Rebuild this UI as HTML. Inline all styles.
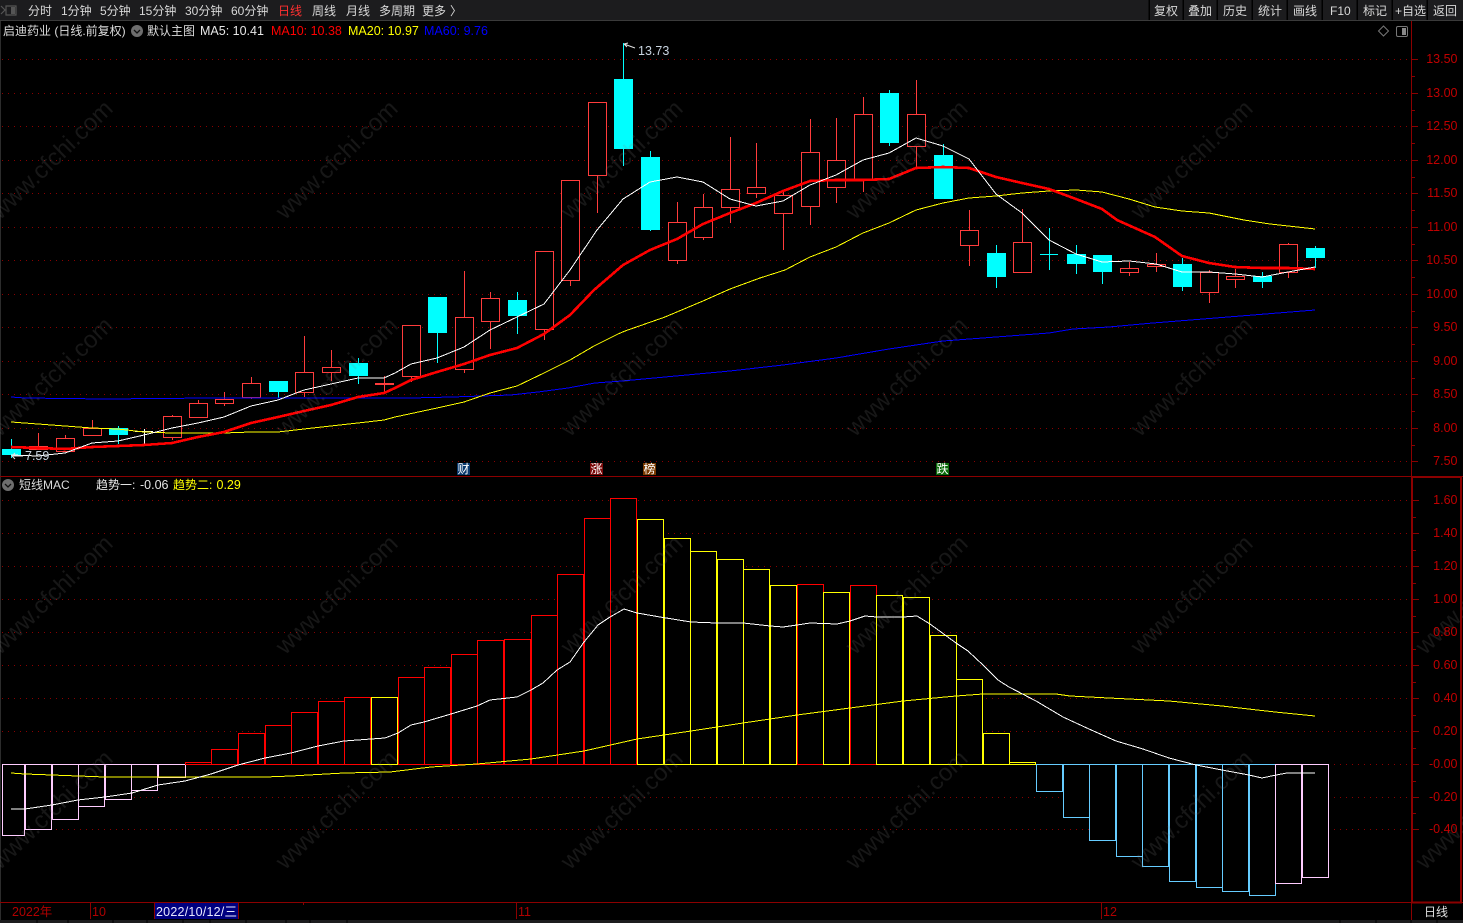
<!DOCTYPE html>
<html lang="zh"><head><meta charset="utf-8"><title>启迪药业</title>
<style>
html,body{margin:0;padding:0;background:#000;width:1463px;height:923px;overflow:hidden}
svg{display:block}
text{font-family:"Liberation Sans","Noto Sans CJK SC",sans-serif;font-size:12px}
.c{shape-rendering:crispEdges}
.tb{fill:#d8d8d8}
.ax{fill:#c00000;font-size:12.5px;text-anchor:end}
.wm{fill:#808080;fill-opacity:.18;font-size:24px;text-anchor:middle;dominant-baseline:central}
.r{fill:#000;stroke:#ff3c3c;stroke-width:1}
.b{fill:#00ffff}
.bp{fill:#000;stroke:#ffccff}.br{fill:#000;stroke:#f00}.by{fill:#000;stroke:#ff0}.bb{fill:#000;stroke:#66ccff}
</style></head><body>
<svg width="1463" height="923" viewBox="0 0 1463 923" xmlns="http://www.w3.org/2000/svg">
<rect width="1463" height="923" fill="#000"/>
<!-- top bar -->
<g class="c"><rect width="1463" height="20" fill="#1c1c1e"/><rect y="20" width="1463" height="1" fill="#3a3a3a"/>
<path d="M1149 0V20M1183 0V20M1217 0V20M1252 0V20M1287 0V20M1322 0V20M1357 0V20M1392 0V20M1427 0V20" stroke="#000" stroke-width="1.5"/>
<rect x="0" y="21" width="1" height="900" fill="#2c2c2c"/></g>
<path d="M1 6l4 4-4 4M6 6h10v9H6z" fill="none" stroke="#555" stroke-width="1.2"/><rect x="11" y="7" width="4" height="7" fill="#555"/>
<g class="tb">
<text x="28" y="15">分时</text><text x="61" y="15">1分钟</text><text x="100" y="15">5分钟</text><text x="139" y="15">15分钟</text><text x="185" y="15">30分钟</text><text x="231" y="15">60分钟</text><text x="278" y="15" style="fill:#ff3030">日线</text><text x="312" y="15">周线</text><text x="346" y="15">月线</text><text x="379" y="15">多周期</text><text x="422" y="15">更多</text><text x="450" y="15">〉</text>
<text x="1154" y="15">复权</text><text x="1188" y="15">叠加</text><text x="1223" y="15">历史</text><text x="1258" y="15">统计</text><text x="1293" y="15">画线</text><text x="1330" y="15">F10</text><text x="1363" y="15">标记</text><text x="1395" y="15">+自选</text><text x="1433" y="15">返回</text>
</g>
<!-- grid -->
<g class="c" fill="none" stroke="#8b0000" stroke-dasharray="1 5">
<path d="M2 59.5H1411M2 93.5H1411M2 126.5H1411M2 160.5H1411M2 193.5H1411M2 227.5H1411M2 260.5H1411M2 294.5H1411M2 327.5H1411M2 361.5H1411M2 394.5H1411M2 428.5H1411M2 461.5H1411"/>
<path d="M2 500.5H1411M2 533.5H1411M2 566.5H1411M2 599.5H1411M2 632.5H1411M2 665.5H1411M2 698.5H1411M2 731.5H1411M2 764.5H1411M2 797.5H1411M2 829.5H1411"/>
</g>
<!-- candle wicks -->
<g class="c" fill="none">
<path stroke="#ff3c3c" d="M38.500 433V450M65.500 435V452M92.500 420V436M172.500 415V440M198.500 400V417M224.500 392V406M251.500 377V399M304.500 336V397M331.500 350V381M384.500 376V392M411.500 325V382M464.500 271V373M490.500 292V349M544.500 251V340M570.500 180V286M597.500 102V213M677.500 202V264M703.500 194V240M730.500 137V223M756.500 143V198M783.500 192V250M810.500 119V225M836.500 118V203M863.500 97V192M916.500 80V168M969.500 210V266M1022.500 209V272M1129.500 262V276M1156.500 253V272M1209.500 270V303M1235.500 269V288M1288.500 243V278"/>
<path stroke="#00ffff" d="M11.500 439V458M118.500 426V444M278.500 381V398M358.500 358V384M437.500 297V363M517.500 292V334M623.500 43V166M650.500 151V231M889.500 90V146M943.500 144V199M996.500 245V288M1076.500 245V274M1102.500 255V284M1182.500 258V291M1262.500 272V288M1315.500 246V268M1049.500 228V270M1040 254.500H1058"/>
<path stroke="#fff" d="M144.500 429V444M135 431.500H153"/>
</g>
<!-- red bodies -->
<g class="c">
<rect class="r" x="29.500" y="446.500" width="18" height="3"/><rect class="r" x="56.500" y="438.500" width="18" height="13"/><rect class="r" x="83.500" y="428.500" width="18" height="7"/><rect class="r" x="163.500" y="416.500" width="18" height="21"/><rect class="r" x="189.500" y="403.500" width="18" height="14"/><rect class="r" x="215.500" y="399.500" width="18" height="4"/><rect class="r" x="242.500" y="383.500" width="18" height="14"/><rect class="r" x="295.500" y="372.500" width="18" height="20"/><rect class="r" x="322.500" y="367.500" width="18" height="5"/><rect x="375" y="383" width="19" height="2" fill="#ff3c3c"/><rect class="r" x="402.500" y="325.500" width="18" height="51"/><rect class="r" x="455.500" y="317.500" width="18" height="52"/><rect class="r" x="481.500" y="298.500" width="18" height="23"/><rect class="r" x="535.500" y="251.500" width="18" height="78"/><rect class="r" x="561.500" y="180.500" width="18" height="100"/><rect class="r" x="588.500" y="102.500" width="18" height="73"/><rect class="r" x="668.500" y="222.500" width="18" height="38"/><rect class="r" x="694.500" y="207.500" width="18" height="30"/><rect class="r" x="721.500" y="189.500" width="18" height="18"/><rect class="r" x="747.500" y="187.500" width="18" height="6"/><rect class="r" x="774.500" y="195.500" width="18" height="18"/><rect class="r" x="801.500" y="152.500" width="18" height="54"/><rect class="r" x="827.500" y="160.500" width="18" height="27"/><rect class="r" x="854.500" y="114.500" width="18" height="65"/><rect class="r" x="907.500" y="114.500" width="18" height="32"/><rect class="r" x="960.500" y="230.500" width="18" height="15"/><rect class="r" x="1013.500" y="242.500" width="18" height="30"/><rect class="r" x="1120.500" y="268.500" width="18" height="4"/><rect class="r" x="1147.500" y="264.500" width="18" height="2"/><rect class="r" x="1200.500" y="272.500" width="18" height="20"/><rect class="r" x="1226.500" y="276.500" width="18" height="3"/><rect class="r" x="1279.500" y="244.500" width="18" height="28"/>
<!-- cyan bodies -->
<rect class="b" x="2" y="449" width="19" height="6"/><rect class="b" x="109" y="428" width="19" height="7"/><rect class="b" x="269" y="381" width="19" height="11"/><rect class="b" x="349" y="363" width="19" height="13"/><rect class="b" x="428" y="297" width="19" height="36"/><rect class="b" x="508" y="300" width="19" height="16"/><rect class="b" x="614" y="79" width="19" height="70"/><rect class="b" x="641" y="157" width="19" height="73"/><rect class="b" x="880" y="93" width="19" height="50"/><rect class="b" x="934" y="155" width="19" height="44"/><rect class="b" x="987" y="253" width="19" height="24"/><rect class="b" x="1067" y="254" width="19" height="10"/><rect class="b" x="1093" y="255" width="19" height="17"/><rect class="b" x="1173" y="264" width="19" height="23"/><rect class="b" x="1253" y="276" width="19" height="6"/><rect class="b" x="1306" y="248" width="19" height="10"/>
</g>
<!-- MA lines -->
<g fill="none" stroke-linejoin="round" class="c">
<polyline stroke="#0000ff" stroke-width="1" points="11,397 25,398 105,399 211,398 384,398 411,398 452,397 511,395 538,392 568,388 595,383 622,381 665,377 730,371 783,365 836,358 889,349 943,341 996,337 1049,333 1073,329 1109,327 1153,323 1203,319 1253,315 1315,310"/>
<polyline stroke="#ffff00" stroke-width="1" points="11,422 38,424 65,426 92,428 118,429 144,432 172,433 198,433 224,433 251,432 278,432 304,429 331,426 358,423 384,420 395,417 437,408 464,402 490,393 517,386 544,373 570,360 594,346 618,334 625,331 665,317 703,301 730,289 760,278 785,270 810,257 836,247 863,233 889,223 916,210 943,203 969,198 996,196 1022,193 1049,191 1076,190 1102,192 1129,199 1155,207 1182,211 1209,213 1244,220 1270,224 1315,229"/>
<polyline stroke="#ff0000" stroke-width="2.6" points="11,447 38,448 65,449 92,447 118,446 144,445 172,443 198,437 224,432 251,423 278,417 304,411 331,405 358,397 384,393 395,388 411,380 437,372 464,364 490,355 517,348 544,334 570,315 594,290 623,265 650,250 677,239 703,224 730,213 756,203 783,191 810,181 836,180 863,180 889,179 916,168 943,167 969,168 996,177 1022,183 1049,189 1076,199 1102,209 1117,220 1155,237 1182,256 1209,263 1235,267 1262,268 1288,268 1315,269"/>
<polyline stroke="#ffffff" stroke-width="1" points="11,455 38,456 65,453 92,443 118,441 144,435 172,428 198,423 224,417 251,406 278,400 304,390 331,384 358,378 384,378 395,373 411,364 437,358 464,347 490,330 517,317 544,304 570,270 597,230 623,199 650,182 677,177 703,182 730,199 756,206 783,201 810,185 836,175 863,160 889,153 916,138 943,146 969,159 996,194 1022,213 1049,240 1076,254 1102,262 1129,261 1156,264 1182,272 1209,272 1235,274 1262,277 1288,272 1315,267"/>
</g>
<!-- high/low labels -->
<path d="M624 44l11 4M624 44l4-1M624 44l3 3" fill="none" stroke="#e0e0e0"/>
<text x="638" y="55" style="fill:#c8d4e0;font-size:12.500px">13.73</text>
<path d="M12 456h11M12 456l3-3M12 456l3 3" fill="none" stroke="#e0e0e0"/>
<text x="25" y="460" style="fill:#c8d4e0;font-size:12.500px">7.59</text>
<!-- markers -->
<g class="c"><rect x="457" y="463" width="13" height="12" fill="#0a3a6e"/><rect x="590" y="463" width="13" height="12" fill="#7a0a0a"/><rect x="643" y="463" width="13" height="12" fill="#7a3a00"/><rect x="936" y="463" width="13" height="12" fill="#0a6a0a"/></g>
<g style="fill:#fff"><text x="457.500" y="473" style="fill:#fff">财</text><text x="590.500" y="473" style="fill:#fff">涨</text><text x="643.500" y="473" style="fill:#fff">榜</text><text x="936.500" y="473" style="fill:#fff">跌</text></g>
<!-- MACD bars -->
<g class="c">
<rect class="bp" x="2.500" y="764.500" width="22" height="71"/><rect class="bp" x="25.500" y="764.500" width="26" height="65"/><rect class="bp" x="52.500" y="764.500" width="26" height="55"/><rect class="bp" x="78.500" y="764.500" width="26" height="42"/><rect class="bp" x="105.500" y="764.500" width="26" height="35"/><rect class="bp" x="131.500" y="764.500" width="26" height="26"/><rect class="bp" x="158.500" y="764.500" width="27" height="13"/>
<rect class="br" x="185.500" y="762.500" width="26" height="2"/><rect class="br" x="211.500" y="749.500" width="26" height="15"/><rect class="br" x="238.500" y="733.500" width="26" height="31"/><rect class="br" x="265.500" y="725.500" width="26" height="39"/><rect class="br" x="291.500" y="712.500" width="26" height="52"/><rect class="br" x="318.500" y="701.500" width="26" height="63"/><rect class="br" x="344.500" y="697.500" width="26" height="67"/><rect class="by" x="371.500" y="697.500" width="26" height="67"/><rect class="br" x="398.500" y="677.500" width="26" height="87"/><rect class="br" x="424.500" y="667.500" width="26" height="97"/><rect class="br" x="451.500" y="654.500" width="26" height="110"/><rect class="br" x="477.500" y="640.500" width="26" height="124"/><rect class="br" x="504.500" y="639.500" width="26" height="125"/><rect class="br" x="531.500" y="615.500" width="26" height="149"/><rect class="br" x="557.500" y="574.500" width="26" height="190"/><rect class="br" x="584.500" y="518.500" width="26" height="246"/><rect class="br" x="610.500" y="498.500" width="26" height="266"/>
<rect class="by" x="637.500" y="519.500" width="26" height="245"/><rect class="by" x="664.500" y="538.500" width="26" height="226"/><rect class="by" x="690.500" y="551.500" width="26" height="213"/><rect class="by" x="717.500" y="559.500" width="26" height="205"/><rect class="by" x="743.500" y="569.500" width="26" height="195"/><rect class="by" x="770.500" y="585.500" width="26" height="179"/><rect class="br" x="797.500" y="584.500" width="26" height="180"/><rect class="by" x="823.500" y="592.500" width="26" height="172"/><rect class="br" x="850.500" y="585.500" width="26" height="179"/><rect class="by" x="876.500" y="595.500" width="26" height="169"/><rect class="by" x="903.500" y="597.500" width="26" height="167"/><rect class="by" x="930.500" y="635.500" width="26" height="129"/><rect class="by" x="956.500" y="679.500" width="26" height="85"/><rect class="by" x="983.500" y="733.500" width="26" height="31"/><rect class="by" x="1009.500" y="762.500" width="26" height="2"/>
<rect class="bb" x="1036.500" y="764.500" width="26" height="27"/><rect class="bb" x="1063.500" y="764.500" width="26" height="53"/><rect class="bb" x="1089.500" y="764.500" width="26" height="76"/><rect class="bb" x="1116.500" y="764.500" width="26" height="92"/><rect class="bb" x="1142.500" y="764.500" width="26" height="102"/><rect class="bb" x="1169.500" y="764.500" width="26" height="117"/><rect class="bb" x="1196.500" y="764.500" width="26" height="123"/><rect class="bb" x="1222.500" y="764.500" width="26" height="127"/><rect class="bb" x="1249.500" y="764.500" width="26" height="131"/><rect class="bp" x="1275.500" y="764.500" width="26" height="119"/><rect class="bp" x="1302.500" y="764.500" width="26" height="113"/>
</g>
<g fill="none" stroke-linejoin="round" class="c">
<polyline stroke="#ffff00" stroke-width="1" points="11,773 25,774 52,775 78,776 105,777 180,777 265,777 291,776 344,773 390,772 431,767 477,764 531,759 584,751 637,739 691,731 743,723 797,715 850,708 903,701 956,696 983,694 1056,694 1070,696 1109,698 1169,701 1222,706 1275,712 1315,716"/>
<polyline stroke="#ffffff" stroke-width="1" points="11,809 25,809 52,805 78,800 105,797 132,793 158,785 185,781 211,774 238,765 265,758 291,753 318,746 344,741 371,739 385,738 398,733 411,725 424,722 451,714 477,706 490,700 517,697 531,690 543,683 557,670 570,662 584,642 598,625 610,617 624,609 637,613 660,617 691,622 717,623 743,623 770,626 783,627 797,625 810,623 837,624 850,621 865,616 877,617 903,617 917,616 930,624 956,643 968,651 983,665 998,680 1009,687 1036,701 1063,717 1089,729 1116,741 1143,749 1169,758 1196,765 1222,770 1249,775 1262,778 1276,775 1287,773 1302,773 1315,773"/>
</g>
<!-- watermark -->
<g>
<text class="wm" transform="translate(52 160) rotate(-44)">www.cfchi.com</text><text class="wm" transform="translate(337 160) rotate(-44)">www.cfchi.com</text><text class="wm" transform="translate(622 160) rotate(-44)">www.cfchi.com</text><text class="wm" transform="translate(907 160) rotate(-44)">www.cfchi.com</text><text class="wm" transform="translate(1192 160) rotate(-44)">www.cfchi.com</text>
<text class="wm" transform="translate(52 377) rotate(-44)">www.cfchi.com</text><text class="wm" transform="translate(337 377) rotate(-44)">www.cfchi.com</text><text class="wm" transform="translate(622 377) rotate(-44)">www.cfchi.com</text><text class="wm" transform="translate(907 377) rotate(-44)">www.cfchi.com</text><text class="wm" transform="translate(1192 377) rotate(-44)">www.cfchi.com</text>
<text class="wm" transform="translate(52 595) rotate(-44)">www.cfchi.com</text><text class="wm" transform="translate(337 595) rotate(-44)">www.cfchi.com</text><text class="wm" transform="translate(622 595) rotate(-44)">www.cfchi.com</text><text class="wm" transform="translate(907 595) rotate(-44)">www.cfchi.com</text><text class="wm" transform="translate(1192 595) rotate(-44)">www.cfchi.com</text><text class="wm" transform="translate(1477 595) rotate(-44)">www.cfchi.com</text>
<text class="wm" transform="translate(52 810) rotate(-44)">www.cfchi.com</text><text class="wm" transform="translate(337 810) rotate(-44)">www.cfchi.com</text><text class="wm" transform="translate(622 810) rotate(-44)">www.cfchi.com</text><text class="wm" transform="translate(907 810) rotate(-44)">www.cfchi.com</text><text class="wm" transform="translate(1192 810) rotate(-44)">www.cfchi.com</text><text class="wm" transform="translate(1477 810) rotate(-44)">www.cfchi.com</text>
</g>
<!-- legends -->
<g style="font-size:12.5px">
<text x="3" y="35" style="fill:#dcdcdc">启迪药业 (日线.前复权)</text>
<circle cx="137" cy="31" r="6" fill="#6e6e6e"/><path d="M134 30l3 3 3-3" fill="none" stroke="#111" stroke-width="1.3"/>
<text x="147" y="35" style="fill:#dcdcdc">默认主图</text>
<text x="200" y="35" style="fill:#e6e6e6;font-size:12.500px">MA5: 10.41</text>
<text x="271" y="35" style="fill:#ff0000;font-size:12.500px">MA10: 10.38</text>
<text x="348" y="35" style="fill:#ffff00;font-size:12.500px">MA20: 10.97</text>
<text x="424" y="35" style="fill:#0000ff;font-size:12.500px">MA60: 9.76</text>
<path d="M1383.500 26l5 5-5 5-5-5z" fill="none" stroke="#777"/>
<rect x="1396.500" y="26.500" width="11" height="10" rx="1.500" fill="none" stroke="#777"/><rect x="1402" y="28" width="4" height="7" fill="#888"/>
<circle cx="8" cy="485" r="6" fill="#6e6e6e"/><path d="M5 484l3 3 3-3" fill="none" stroke="#111" stroke-width="1.3"/>
<text x="19" y="489" style="fill:#dcdcdc">短线MAC</text>
<text x="96" y="489" style="fill:#e6e6e6">趋势一:<tspan x="140" style="font-size:12.500px">-0.06</tspan></text>
<text x="173" y="489" style="fill:#ffff00">趋势二:<tspan x="216.500" style="font-size:12.500px">0.29</tspan></text>
</g>
<!-- axes -->
<g class="c" fill="none" stroke="#8b0000">
<path d="M1411.500 21V477"/>
<path d="M0 476.500H1463"/>
<rect x="1412" y="477" width="49" height="425.500" stroke-width="2"/>
<path d="M0 902.500H1463M1411.500 903V920M90.500 903V919M516.500 903V919M1101.500 903V919M303.500 903V905"/>
<path d="M1412 59.500h6M1412 93.500h6M1412 126.500h6M1412 160.500h6M1412 193.500h6M1412 227.500h6M1412 260.500h6M1412 294.500h6M1412 327.500h6M1412 361.500h6M1412 394.500h6M1412 428.500h6M1412 461.500h6M1412 76.500h3M1412 110.500h3M1412 143.500h3M1412 177.500h3M1412 210.500h3M1412 244.500h3M1412 277.500h3M1412 311.500h3M1412 344.500h3M1412 378.500h3M1412 411.500h3M1412 445.500h3"/>
<path d="M1413 500.500h6M1413 533.500h6M1413 566.500h6M1413 599.500h6M1413 632.500h6M1413 665.500h6M1413 698.500h6M1413 731.500h6M1413 764.500h6M1413 797.500h6M1413 829.500h6M1413 517.500h3M1413 550.500h3M1413 583.500h3M1413 616.500h3M1413 649.500h3M1413 682.500h3M1413 715.500h3M1413 748.500h3M1413 781.500h3M1413 813.500h3"/>
</g>
<g>
<text class="ax" x="1457.500" y="63">13.50</text><text class="ax" x="1457.500" y="97">13.00</text><text class="ax" x="1457.500" y="130">12.50</text><text class="ax" x="1457.500" y="164">12.00</text><text class="ax" x="1457.500" y="197">11.50</text><text class="ax" x="1457.500" y="231">11.00</text><text class="ax" x="1457.500" y="264">10.50</text><text class="ax" x="1457.500" y="298">10.00</text><text class="ax" x="1457.500" y="331">9.50</text><text class="ax" x="1457.500" y="365">9.00</text><text class="ax" x="1457.500" y="398">8.50</text><text class="ax" x="1457.500" y="432">8.00</text><text class="ax" x="1457.500" y="465">7.50</text>
<text class="ax" x="1457.500" y="504">1.60</text><text class="ax" x="1457.500" y="537">1.40</text><text class="ax" x="1457.500" y="570">1.20</text><text class="ax" x="1457.500" y="603">1.00</text><text class="ax" x="1457.500" y="636">0.80</text><text class="ax" x="1457.500" y="669">0.60</text><text class="ax" x="1457.500" y="702">0.40</text><text class="ax" x="1457.500" y="735">0.20</text><text class="ax" x="1457.500" y="768">-0.00</text><text class="ax" x="1457.500" y="801">-0.20</text><text class="ax" x="1457.500" y="833">-0.40</text>
</g>
<!-- date axis -->
<text x="12" y="916" style="fill:#b00000;font-size:12.500px">2022年</text>
<text x="92" y="916" style="fill:#b00000;font-size:12.500px">10</text>
<rect class="c" x="154" y="903" width="85" height="16" fill="#000080"/>
<path class="c" d="M154.500 903V919M238.500 903V919" stroke="#8b0000" fill="none"/>
<text x="156" y="916" textLength="81" lengthAdjust="spacing" style="fill:#e8e8ff;font-size:12.500px">2022/10/12/三</text>
<text x="518" y="916" style="fill:#b00000;font-size:12.500px">11</text>
<text x="1103" y="916" style="fill:#b00000;font-size:12.500px">12</text>
<text x="1424" y="916" style="fill:#e0e0e0">日线</text>
<g class="c"><rect y="920" width="1463" height="3" fill="#1c1c1e"/>
<path d="M37 920V923M68 920V923M113 920V923M147 920V923M183 920V923M210 920V923M246 920V923M286 920V923M310 920V923M347 920V923M1340 920V923M1376 920V923M1411 920V923M1437 920V923" stroke="#000" stroke-width="1"/></g>
</svg>
</body></html>
